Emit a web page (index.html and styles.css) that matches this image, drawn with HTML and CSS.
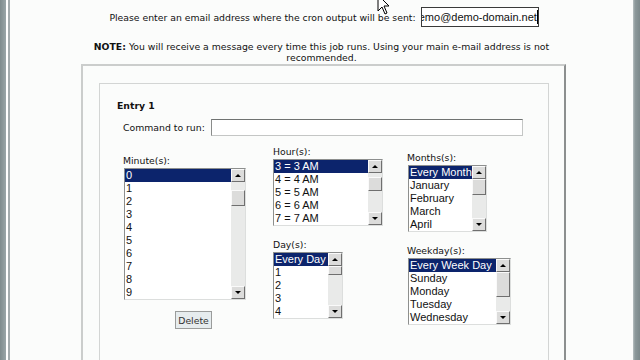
FILE: index.html
```html
<!DOCTYPE html>
<html lang="en">
<head>
    <meta charset="UTF-8">
    <meta name="viewport" content="width=device-width, initial-scale=1.0">
    <title>Cron Jobs</title>
    <link rel="stylesheet" href="styles.css">
</head>
<body>
    <div class="window">
        <div class="edge-left"></div>
        <div class="page">
            <svg class="pointer" width="14" height="22" viewBox="0 0 14 22">
                <path d="M1 1 L1 17 L5 13 L8 20 L10 19 L7 12 L12 12 Z" fill="#fff" stroke="#000" stroke-width="1"/>
            </svg>
            <div class="email-row">
                <span>Please enter an email address where the cron output will be sent:</span>
                <div class="email-box"><span class="email-text">demo@demo-domain.net</span><span class="caret"></span></div>
            </div>
            <p class="note"><b>NOTE:</b> You will receive a message every time this job runs. Using your main e-mail address is not recommended.</p>
            <div class="outer">
                <div class="entry">
                    <div class="entry-title">Entry 1</div>
                    <div class="cmd-row">
                        <span class="cmd-label">Command to run:</span>
                        <div class="cmd-input"></div>
                    </div>
                    <div class="fields">
                        <div class="col col-1">
                            <div class="lbl">Minute(s):</div>
                            <div class="listbox lb-minute">
                                <ul class="items">
                                    <li class="sel">0</li><li>1</li><li>2</li><li>3</li><li>4</li>
                                    <li>5</li><li>6</li><li>7</li><li>8</li><li>9</li>
                                </ul>
                                <div class="sb">
                                    <div class="sb-btn up"></div>
                                    <div class="sb-track"><div class="sb-thumb"></div></div>
                                    <div class="sb-btn down"></div>
                                </div>
                            </div>
                            <button class="delete">Delete</button>
                        </div>
                        <div class="col col-2">
                            <div class="lbl">Hour(s):</div>
                            <div class="listbox lb-hour">
                                <ul class="items">
                                    <li class="sel">3 = 3 AM</li><li>4 = 4 AM</li><li>5 = 5 AM</li><li>6 = 6 AM</li><li>7 = 7 AM</li>
                                </ul>
                                <div class="sb">
                                    <div class="sb-btn up"></div>
                                    <div class="sb-track"><div class="sb-thumb"></div></div>
                                    <div class="sb-btn down"></div>
                                </div>
                            </div>
                            <div class="lbl lbl-lower">Day(s):</div>
                            <div class="listbox lb-day">
                                <ul class="items">
                                    <li class="sel">Every Day</li><li>1</li><li>2</li><li>3</li><li>4</li>
                                </ul>
                                <div class="sb">
                                    <div class="sb-btn up"></div>
                                    <div class="sb-track"><div class="sb-thumb"></div></div>
                                    <div class="sb-btn down"></div>
                                </div>
                            </div>
                        </div>
                        <div class="col col-3">
                            <div class="lbl">Months(s):</div>
                            <div class="listbox lb-month">
                                <ul class="items">
                                    <li class="sel">Every Month</li><li>January</li><li>February</li><li>March</li><li>April</li>
                                </ul>
                                <div class="sb">
                                    <div class="sb-btn up"></div>
                                    <div class="sb-track"><div class="sb-thumb"></div></div>
                                    <div class="sb-btn down"></div>
                                </div>
                            </div>
                            <div class="lbl lbl-lower">Weekday(s):</div>
                            <div class="listbox lb-weekday">
                                <ul class="items">
                                    <li class="sel">Every Week Day</li><li>Sunday</li><li>Monday</li><li>Tuesday</li><li>Wednesday</li>
                                </ul>
                                <div class="sb">
                                    <div class="sb-btn up"></div>
                                    <div class="sb-track"><div class="sb-thumb"></div></div>
                                    <div class="sb-btn down"></div>
                                </div>
                            </div>
                        </div>
                    </div>
                </div>
            </div>
        </div>
        <div class="edge-right"></div>
    </div>
</body>
</html>
```

FILE: styles.css
```css
body {
    margin: 0;
    font-family: "DejaVu Sans", Verdana, sans-serif;
    font-size: 9.3px;
    color: #111;
    background: #fbfcfb;
}
.window {
    display: flex;
    height: 360px;
    overflow: hidden;
}
.edge-left {
    width: 10px;
    flex-shrink: 0;
    background: linear-gradient(to right, #7e8b8d 0, #9aa6a8 6px, #fff 6px, #fff 8px, #a4acae 8px, #a4acae 10px);
}
.edge-right {
    width: 7px;
    flex-shrink: 0;
    background: linear-gradient(to right, #b9c1c2 0, #8d999b 2px, #7c898b 7px);
}
.page {
    flex: 1;
    position: relative;
}
.pointer {
    position: absolute;
    left: 367px;
    top: -6px;
}

/* top email line */
.email-row {
    display: flex;
    justify-content: center;
    align-items: center;
    gap: 5px;
    padding: 7px 0 0 5px;
    height: 20px;
}
.email-box {
    width: 116px;
    height: 18px;
    border: 1px solid #3a3a3a;
    background: #fff;
    overflow: hidden;
    white-space: nowrap;
    display: flex;
    align-items: center;
    font-family: "Liberation Sans", Arial, sans-serif;
    font-size: 11px;
}
.email-text {
    margin-left: -9px;
}
.caret {
    display: inline-block;
    width: 1px;
    height: 14px;
    background: #000;
}
.note {
    margin: 14px auto 0;
    width: 480px;
    text-align: center;
    line-height: 11px;
}

/* entry boxes */
.outer {
    margin: 1px 0 0 71px;
    width: 450px;
    height: 300px;
    padding: 17px 15px 0 16px;
    border: 2px solid #cbcdcc;
    border-right-color: #8c8f8f;
}
.entry {
    height: 270px;
    border: 1px solid #d3d5d4;
    padding: 16px 0 0 17px;
}
.entry-title {
    font-weight: bold;
    line-height: 12px;
}
.cmd-row {
    display: flex;
    align-items: center;
    gap: 6px;
    margin: 7px 0 0 6px;
    height: 17px;
}
.cmd-input {
    width: 310px;
    height: 15px;
    border: 1px solid #c4c6c5;
    border-top-color: #6f7271;
    border-left-color: #8a8c8b;
    background: #fff;
}
.fields {
    display: grid;
    grid-template-columns: 150px 134px auto;
    margin: 10px 0 0 6px;
}
.col-1 { margin-top: 9px; }
.col-3 { margin-top: 6px; }
.lbl {
    line-height: 12px;
    margin-bottom: 1px;
}
.lbl-lower {
    margin-top: 13px;
}

/* list boxes */
.listbox {
    display: flex;
    border: 1px solid #8d8f8e;
    border-right-color: #dcdedd;
    border-bottom-color: #dcdedd;
    background: #fff;
    margin-left: 1px;
    font-family: "Liberation Sans", Arial, sans-serif;
    font-size: 11px;
}
.col-2 .listbox { margin-left: 0; }
.items {
    flex: 1;
    list-style: none;
    margin: 0;
    padding: 0;
    overflow: hidden;
}
.items li {
    height: 13px;
    line-height: 13px;
    padding-left: 1px;
    white-space: nowrap;
}
.items li.sel {
    background: #0c246c;
    color: #fff;
}
.lb-minute { width: 120px; height: 130px; }
.lb-hour { width: 108px; height: 65px; }
.lb-day { width: 68px; height: 65px; }
.lb-month { width: 77px; height: 65px; }
.lb-weekday { width: 101px; height: 65px; }

.sb {
    width: 14px;
    flex-shrink: 0;
    display: flex;
    flex-direction: column;
    background: #e9eae9;
}
.sb-btn, .sb-thumb {
    box-sizing: border-box;
    background: #dcdcdb;
    border: 1px solid;
    border-color: #fafafa #6f6f6f #6f6f6f #fafafa;
}
.sb-btn {
    height: 13px;
    position: relative;
}
.sb-btn::after {
    content: "";
    position: absolute;
    left: 3px;
    border-left: 3px solid transparent;
    border-right: 3px solid transparent;
}
.sb-btn.up::after {
    top: 4px;
    border-bottom: 3px solid #000;
}
.sb-btn.down::after {
    top: 4px;
    border-top: 3px solid #000;
}
.sb-track {
    flex: 1;
}
.lb-minute .sb-thumb { margin-top: 8px; height: 16px; }
.lb-hour .sb-thumb { margin-top: 4px; height: 14px; }
.lb-day .sb-thumb { height: 9px; }
.lb-month .sb-thumb { height: 16px; }
.lb-weekday .sb-thumb { height: 25px; }

.delete {
    margin: 11px 0 0 52px;
    width: 37px;
    height: 18px;
    padding: 0;
    font-family: "DejaVu Sans", Verdana, sans-serif;
    font-size: 9.3px;
    color: #333;
    background: #e6ecee;
    border: 1px solid #9a9c9b;
}
```
